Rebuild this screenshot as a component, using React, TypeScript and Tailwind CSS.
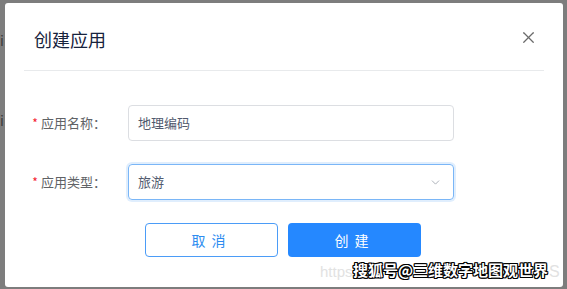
import { X, ChevronDown } from 'lucide-react';

const font = { fontFamily: '"Noto Sans CJK SC", "Noto Sans", sans-serif' };

function FormRow({ label, children }: { label: string; children: React.ReactNode }) {
  return (
    <div className="flex items-center">
      <div className="w-[104px] flex items-center justify-end pr-[22px] text-[13px] text-[#606266]">
        <span className="text-[#f5222d] mr-[3px] text-[12px]">*</span>
        <span>{label}：</span>
      </div>
      {children}
    </div>
  );
}

export default function App() {
  return (
    <div className="w-[567px] h-[289px] bg-[#7d7d7d] relative overflow-hidden" style={font}>
      {/* page underneath, mostly hidden */}
      <div className="absolute left-0 top-[110px] text-[14px] text-[#3a3a3a]">i</div>
      <div className="absolute left-0 top-[30px] text-[14px] text-[#3a3a3a]">i</div>

      <div className="absolute left-[5px] top-[3px] w-[558px] h-[284px] bg-white rounded-[3px] px-[19px]">
        {/* header */}
        <div className="h-[68px] border-b border-[#e8eaec] flex items-center justify-between pl-[10px] pr-[6px]">
          <span className="text-[18px] text-[#17233d] pt-[5px]">创建应用</span>
          <X size={19} strokeWidth={1.6} className="text-[#6b6b6b] mt-[2px]" />
        </div>

        {/* form */}
        <div className="pt-[34px] flex flex-col gap-[23px]">
          <FormRow label="应用名称">
            <div className="w-[326px] h-[36px] border border-[#dcdee2] rounded-[4px] flex items-center px-[9px] text-[13px] text-[#515a6e]">
              地理编码
            </div>
          </FormRow>
          <FormRow label="应用类型">
            <div className="w-[326px] h-[36px] border border-[#7ab6f7] rounded-[4px] shadow-[0_0_0_2px_rgba(45,140,240,0.15)] flex items-center justify-between px-[9px] text-[13px] text-[#515a6e]">
              <span>旅游</span>
              <ChevronDown size={13} strokeWidth={1.5} className="text-[#9aa0aa] mr-[2px]" />
            </div>
          </FormRow>
        </div>

        {/* footer buttons */}
        <div className="flex gap-[10px] pl-[121px] pt-[23px]">
          <button className="w-[133px] h-[34px] border border-[#4b9cf7] rounded-[4px] text-[#2d8cf0] text-[14px] tracking-[6px] bg-white">
            取消
          </button>
          <button className="w-[133px] h-[34px] rounded-[4px] bg-[#2588ff] text-white text-[14px] tracking-[6px]">
            创建
          </button>
        </div>
      </div>

      {/* watermark */}
      <div className="absolute left-[320px] top-[261px] text-[15px] text-[#e2e2e2]" style={{ fontFamily: '"Liberation Sans", sans-serif' }}>
        https
      </div>
      <div className="absolute left-[549px] top-[260px] text-[16px] text-[#e2e2e2]" style={{ fontFamily: '"Liberation Sans", sans-serif' }}>
        S
      </div>
      <div
        className="absolute left-[353px] top-[259px] text-[15px] font-bold text-white whitespace-nowrap"
        style={{ textShadow: '-1px -1px 0 #000, 1px -1px 0 #000, -1px 1px 0 #000, 1px 1px 0 #000, 0 1px 0 #000, 0 -1px 0 #000, 1px 0 0 #000, -1px 0 0 #000' }}
      >
        搜狐号@三维数字地图观世界
      </div>
    </div>
  );
}
